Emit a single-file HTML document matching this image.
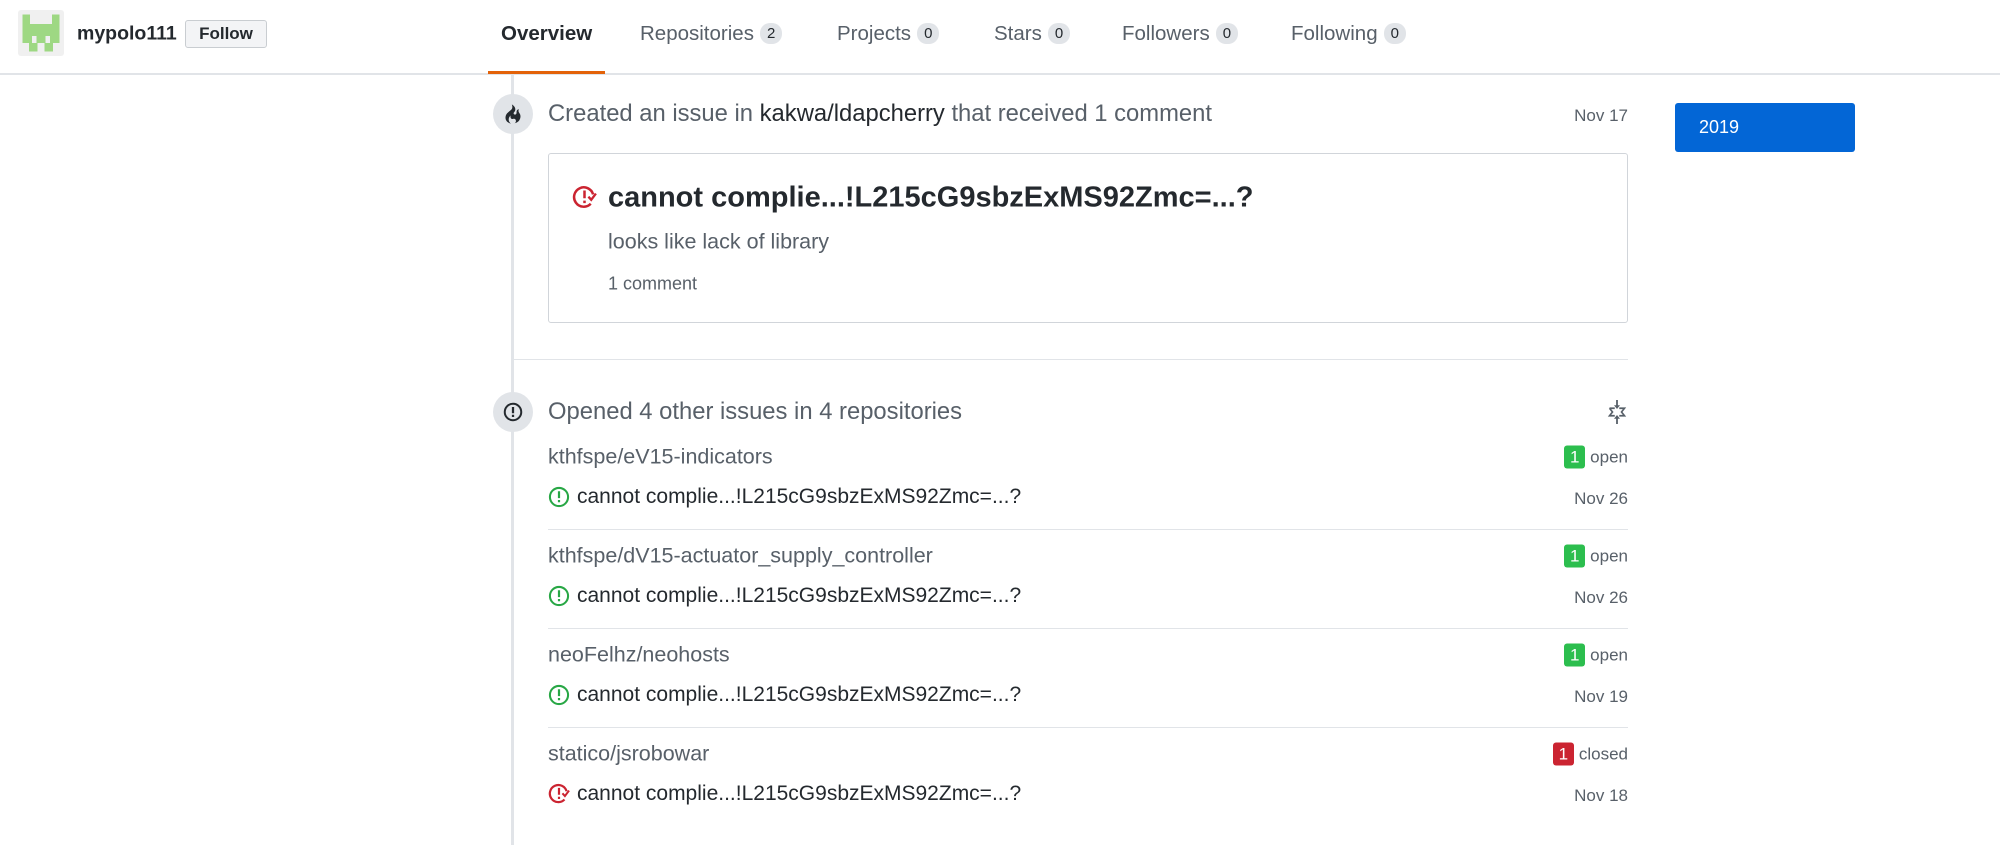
<!DOCTYPE html>
<html><head><meta charset="utf-8"><style>
*{margin:0;padding:0;box-sizing:border-box}
body{width:2000px;height:845px;background:#fff;font-family:"Liberation Sans",Helvetica,Arial,sans-serif;color:#24292e;position:relative;overflow:hidden}
.a{position:absolute;white-space:nowrap}
.vc{transform:translateY(-50%)}
.tab{font-size:20.5px;color:#586069}
.cnt{display:inline-block;background:#e1e4e8;border-radius:10px;font-size:15px;color:#24292e;padding:2px 7px;margin-left:6px;vertical-align:2px}
.g{color:#586069}
.badge{display:inline-block;width:21px;height:23px;border-radius:3px;color:#fff;font-size:17px;text-align:center;line-height:23px;margin-right:5px}
.rn{font-size:21.5px}
.it{font-size:21px}
</style></head><body>
<!-- header -->
<div class="a" style="left:18px;top:10px;width:46px;height:46px;background:#f0f0f0;border-radius:3px"></div>
<svg class="a" style="left:18px;top:10px" width="46" height="46" viewBox="0 0 5 5" shape-rendering="crispEdges">
<g fill="#9ed883"><rect x="0.5" y="0.5" width="0.8" height="1"/><rect x="3.7" y="0.5" width="0.8" height="1"/><rect x="0.5" y="1.5" width="4" height="1.3"/><rect x="0.5" y="2.8" width="1" height="0.8"/><rect x="2" y="2.8" width="1" height="0.8"/><rect x="3.5" y="2.8" width="1" height="0.8"/><rect x="1.2" y="3.6" width="0.9" height="0.9"/><rect x="2.9" y="3.6" width="0.9" height="0.9"/></g></svg>
<div class="a vc" style="left:77px;top:34px;font-size:19.5px;font-weight:bold">mypolo111</div>
<div class="a" style="left:185px;top:20px;width:82px;height:28px;border:1px solid #c9cdd1;border-radius:3px;background:#f3f4f6;font-size:17px;font-weight:bold;text-align:center;line-height:26px">Follow</div>
<div class="a vc tab" style="left:501px;top:34px;color:#24292e;font-weight:bold">Overview</div>
<div class="a vc tab" style="left:640px;top:34px">Repositories<span class="cnt">2</span></div>
<div class="a vc tab" style="left:837px;top:34px">Projects<span class="cnt">0</span></div>
<div class="a vc tab" style="left:994px;top:34px">Stars<span class="cnt">0</span></div>
<div class="a vc tab" style="left:1122px;top:34px">Followers<span class="cnt">0</span></div>
<div class="a vc tab" style="left:1291px;top:34px">Following<span class="cnt">0</span></div>
<div class="a" style="left:0;top:73px;width:2000px;height:2px;background:#e1e4e8"></div>
<div class="a" style="left:488px;top:71px;width:117px;height:3px;background:#e36209"></div>
<!-- timeline -->
<div class="a" style="left:511px;top:75px;width:3px;height:770px;background:#e1e4e8"></div>
<div class="a" style="left:493px;top:94px;width:40px;height:40px;border-radius:50%;background:#e1e4e8"></div>
<svg class="a" style="left:503px;top:104px" width="20" height="20" viewBox="0 0 12 16"><path fill="#24292e" d="M5.05.31c.81 2.170.41 3.38-.52 4.31C3.55 5.670 1.980 6.450.9 7.98c-1.45 2.05-1.7 6.53 3.53 7.7-2.2-1.16-2.67-4.52-.3-6.61-.61 2.03.53 3.33 1.94 2.86 1.39-.47 2.3.53 2.27 1.67-.02.78-.31 1.44-1.13 1.81 3.42-.59 4.78-3.42 4.78-5.56 0-2.84-2.53-3.22-1.25-5.61-1.52.13-2.03 1.13-1.89 2.75.09 1.08-1.02 1.8-1.86 1.33-.67-.41-.66-1.19-.06-1.78C8.18 5.31 8.68 2.45 5.05.32z"/></svg>
<div class="a vc g" style="left:548px;top:114px;font-size:23.8px">Created an issue in <span style="color:#24292e">kakwa/ldapcherry</span> that received 1 comment</div>
<div class="a vc g" style="right:372px;top:116px;font-size:17px">Nov 17</div>
<div class="a" style="left:548px;top:153px;width:1080px;height:170px;border:1px solid #d1d5da;border-radius:3px"></div>
<svg class="a" style="left:572px;top:185px" width="25" height="25" viewBox="0 0 16 16"><path fill="none" stroke="#cb2431" stroke-width="1.6" d="M13.5 6A6.2 6.2 0 1 0 12 12"/><path fill="#cb2431" d="M7.2 3.5h1.6v5H7.2zM7.2 10h1.6v1.6H7.2z"/><path fill="none" stroke="#cb2431" stroke-width="1.5" d="M10.5 7.5l1.8 2 3-4"/></svg>
<div class="a vc" style="left:608px;top:198px;font-size:29px;font-weight:bold">cannot complie...!L215cG9sbzExMS92Zmc=...?</div>
<div class="a vc g" style="left:608px;top:242px;font-size:21.5px">looks like lack of library</div>
<div class="a vc g" style="left:608px;top:284px;font-size:18px">1 comment</div>
<div class="a" style="left:514px;top:359px;width:1114px;height:1px;background:#e1e4e8"></div>
<!-- second -->
<div class="a" style="left:493px;top:392px;width:40px;height:40px;border-radius:50%;background:#e1e4e8"></div>
<svg class="a" style="left:503px;top:402px" width="20" height="20" viewBox="0 0 16 16"><circle cx="8" cy="8" r="6.6" fill="none" stroke="#24292e" stroke-width="1.6"/><path fill="#24292e" d="M7.1 4h1.8v5H7.1zM7.1 10.2h1.8V12H7.1z"/></svg>
<div class="a vc g" style="left:548px;top:412px;font-size:23.8px">Opened 4 other issues in 4 repositories</div>
<svg class="a" style="left:1605px;top:400px" width="24" height="24" viewBox="0 0 16 16"><path fill="none" stroke="#586069" stroke-width="1.1" d="M3 5.5h3.5M9.5 5.5H13L11 8l2 2.5H9.5M6.5 10.5H3L5 8 3 5.5"/><path fill="#586069" d="M7.4 0h1.2v3.5H10L8 6 6 3.5h1.4zM8 10l2 2.5H8.6V16H7.4v-3.5H6z"/></svg>

<div class="a vc g rn" style="left:548px;top:457px">kthfspe/eV15-indicators</div>
<div class="a vc g" style="right:372px;top:457px;font-size:17px"><span class="badge" style="background:#2cbe4e">1</span>open</div>
<svg class="a" style="left:548px;top:486px" width="22" height="22" viewBox="0 0 16 16"><circle cx="8" cy="8" r="6.6" fill="none" stroke="#28a745" stroke-width="1.5"/><path fill="#28a745" d="M7.2 3.8h1.6v5H7.2zM7.2 10.2h1.6v1.6H7.2z"/></svg>
<div class="a vc it" style="left:577px;top:497px">cannot complie...!L215cG9sbzExMS92Zmc=...?</div>
<div class="a vc g" style="right:372px;top:499px;font-size:17px">Nov 26</div>
<div class="a" style="left:548px;top:529px;width:1080px;height:1px;background:#e1e4e8"></div>

<div class="a vc g rn" style="left:548px;top:556px">kthfspe/dV15-actuator_supply_controller</div>
<div class="a vc g" style="right:372px;top:556px;font-size:17px"><span class="badge" style="background:#2cbe4e">1</span>open</div>
<svg class="a" style="left:548px;top:585px" width="22" height="22" viewBox="0 0 16 16"><circle cx="8" cy="8" r="6.6" fill="none" stroke="#28a745" stroke-width="1.5"/><path fill="#28a745" d="M7.2 3.8h1.6v5H7.2zM7.2 10.2h1.6v1.6H7.2z"/></svg>
<div class="a vc it" style="left:577px;top:596px">cannot complie...!L215cG9sbzExMS92Zmc=...?</div>
<div class="a vc g" style="right:372px;top:598px;font-size:17px">Nov 26</div>
<div class="a" style="left:548px;top:628px;width:1080px;height:1px;background:#e1e4e8"></div>

<div class="a vc g rn" style="left:548px;top:655px">neoFelhz/neohosts</div>
<div class="a vc g" style="right:372px;top:655px;font-size:17px"><span class="badge" style="background:#2cbe4e">1</span>open</div>
<svg class="a" style="left:548px;top:684px" width="22" height="22" viewBox="0 0 16 16"><circle cx="8" cy="8" r="6.6" fill="none" stroke="#28a745" stroke-width="1.5"/><path fill="#28a745" d="M7.2 3.8h1.6v5H7.2zM7.2 10.2h1.6v1.6H7.2z"/></svg>
<div class="a vc it" style="left:577px;top:695px">cannot complie...!L215cG9sbzExMS92Zmc=...?</div>
<div class="a vc g" style="right:372px;top:697px;font-size:17px">Nov 19</div>
<div class="a" style="left:548px;top:727px;width:1080px;height:1px;background:#e1e4e8"></div>

<div class="a vc g rn" style="left:548px;top:754px">statico/jsrobowar</div>
<div class="a vc g" style="right:372px;top:754px;font-size:17px"><span class="badge" style="background:#cb2431">1</span>closed</div>
<svg class="a" style="left:548px;top:783px" width="22" height="22" viewBox="0 0 16 16"><path fill="none" stroke="#cb2431" stroke-width="1.6" d="M13.5 6A6.2 6.2 0 1 0 12 12"/><path fill="#cb2431" d="M7.2 3.5h1.6v5H7.2zM7.2 10h1.6v1.6H7.2z"/><path fill="none" stroke="#cb2431" stroke-width="1.5" d="M10.5 7.5l1.8 2 3-4"/></svg>
<div class="a vc it" style="left:577px;top:794px">cannot complie...!L215cG9sbzExMS92Zmc=...?</div>
<div class="a vc g" style="right:372px;top:796px;font-size:17px">Nov 18</div>

<!-- year -->
<div class="a" style="left:1675px;top:103px;width:180px;height:49px;background:#0366d6;border-radius:3px;color:#fff;font-size:18px;line-height:49px;padding-left:24px">2019</div>
</body></html>
